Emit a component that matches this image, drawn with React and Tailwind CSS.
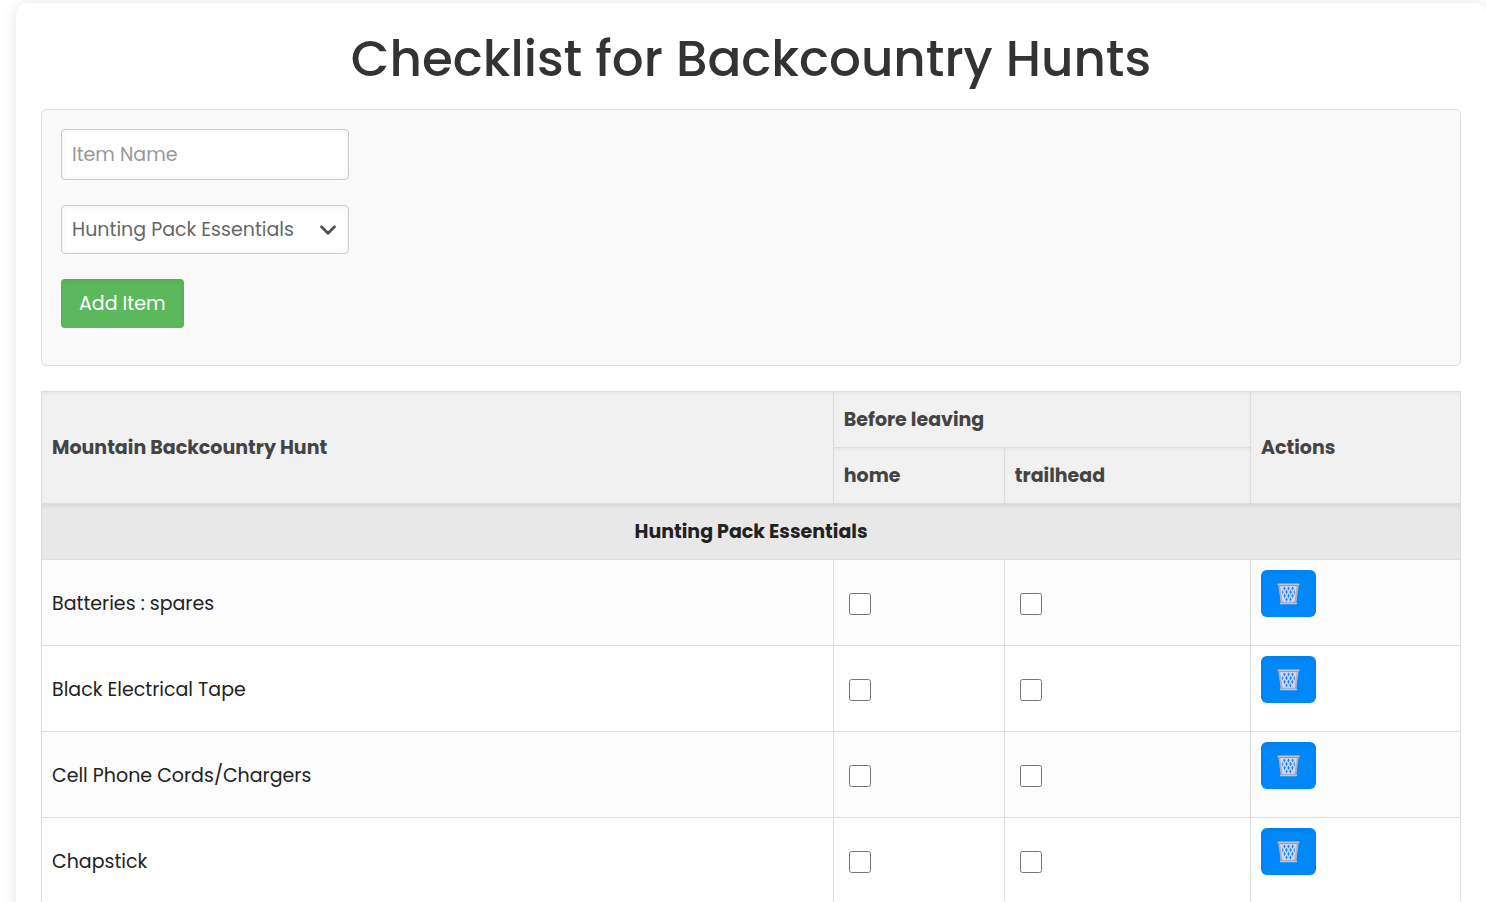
import React, { useState } from "react";
import { ChevronDown } from "lucide-react";

const categories = [
  {
    name: "Hunting Pack Essentials",
    items: ["Batteries : spares", "Black Electrical Tape", "Cell Phone Cords/Chargers", "Chapstick"],
  },
];

const BasketIcon = () => (
  <svg viewBox="0 0 24 24" className="w-6 h-6" aria-hidden="true">
    <path d="M3 3.5h19L20 21.5H5z" fill="#d3d6f0" />
    <g fill="#1a86ea">
      <path d="M8.4 4.4l1.2 1.8-1.2 2.4-1.2-2.4zM12.5 4.4l1.2 1.8-1.2 2.4-1.2-2.4zM16.6 4.4l1.2 1.8-1.2 2.4-1.2-2.4z" />
      <path d="M10.5 7.6l1.2 2.4-1.2 2.4-1.2-2.4zM14.5 7.6l1.2 2.4-1.2 2.4-1.2-2.4zM6.5 7.6l1 2.4-.8 2.4-.6-1.6zM18.5 7.6l-1 2.4.8 2.4.6-1.6z" />
      <path d="M8.6 11.4l1.1 2.4-1.1 2.4-1.1-2.4zM12.5 11.4l1.2 2.4-1.2 2.4-1.2-2.4zM16.4 11.4l1.1 2.4-1.1 2.4-1.1-2.4z" />
      <path d="M10.6 15.2l1.1 2.4-1.1 2-1.1-2zM14.4 15.2l1.1 2.4-1.1 2-1.1-2z" />
    </g>
    <path d="M3.2 3.5L5.8 21M21.8 3.5L19.2 21" stroke="#b5acb8" strokeWidth="1.8" fill="none" />
    <path d="M2.4 2.4h20.2" stroke="#c9c1c9" strokeWidth="2" strokeLinecap="round" />
    <path d="M2.8 3.6h19.4" stroke="#94899a" strokeWidth="0.7" />
    <path d="M4.8 21.4h15.4" stroke="#c9c1c9" strokeWidth="1.8" strokeLinecap="round" />
    <path d="M5.4 20.3h14.2" stroke="#94899a" strokeWidth="0.6" />
  </svg>
);

const App = () => {
  const [itemName, setItemName] = useState("");
  const [category, setCategory] = useState(categories[0].name);
  const [list, setList] = useState(categories);

  const handleSubmit = (e) => {
    e.preventDefault();
    const name = itemName.trim();
    if (!name) return;
    setList(list.map((c) => (c.name === category ? { ...c, items: [...c.items, name] } : c)));
    setItemName("");
  };

  const handleDelete = (categoryName, index) => {
    setList(
      list.map((c) =>
        c.name === categoryName ? { ...c, items: c.items.filter((_, i) => i !== index) } : c
      )
    );
  };

  const th = "border border-[#dddddd] bg-[#f1f1f1] px-[10px] py-[14px] text-left font-bold text-[#444444] shadow-[inset_0_4px_5px_-3px_rgba(0,0,0,0.06)]";
  const td = "border border-[#dddddd] px-[10px]";

  return (
    <div className="h-screen overflow-x-hidden overflow-y-auto bg-white pl-4 pt-[3px] font-['Poppins','Inter',sans-serif] text-[19px] leading-[27px] text-[#222222] [scrollbar-width:none]">
      <main className="rounded-[10px] bg-white px-[25px] pt-[26px] pb-[25px] shadow-[0_0_15px_rgba(0,0,0,0.1)]">
        <h1 className="mb-5 text-center text-[50px] leading-[60px] font-medium text-[#333333]">
          Checklist for Backcountry Hunts
        </h1>

        <form
          onSubmit={handleSubmit}
          className="mb-[25px] flex flex-col items-start gap-[25px] rounded-[5px] border border-[#dddddd] bg-[#f9f9f9] px-[19px] pt-[19px] pb-[37px]"
        >
          <input
            type="text"
            aria-label="Item Name"
            placeholder="Item Name"
            className="h-[51px] w-72 rounded-[4px] border border-[#cccccc] bg-white px-[10px] text-[#666666] shadow-[inset_0_0_6px_rgba(0,0,0,0.06)] placeholder:text-[#999999] focus:outline-none"
            value={itemName}
            onChange={(e) => setItemName(e.target.value)}
          />
          <div className="relative w-72">
            <select
              aria-label="Category"
              className="block h-[49px] w-full appearance-none rounded-[4px] border border-[#cccccc] bg-white pr-10 pl-[10px] text-[#666666] shadow-[inset_0_0_6px_rgba(0,0,0,0.06)] focus:outline-none"
              value={category}
              onChange={(e) => setCategory(e.target.value)}
            >
              {list.map((c) => (
                <option key={c.name}>{c.name}</option>
              ))}
            </select>
            <ChevronDown
              size={26}
              strokeWidth={2.6}
              className="pointer-events-none absolute top-3 right-2 text-[#505050]"
            />
          </div>
          <button
            type="submit"
            className="h-[49px] cursor-pointer rounded-[4px] bg-[#5cb85c] px-[18px] text-white shadow-[inset_0_2px_4px_rgba(0,0,0,0.08)] hover:bg-[#4cae4c]"
          >
            Add Item
          </button>
        </form>

        <table className="w-full table-fixed border-collapse">
          <colgroup>
            <col className="w-[55.8%]" />
            <col className="w-[12.05%]" />
            <col className="w-[17.35%]" />
            <col className="w-[14.8%]" />
          </colgroup>
          <thead>
            <tr>
              <th rowSpan={2} className={th}>Mountain Backcountry Hunt</th>
              <th colSpan={2} className={th}>Before leaving</th>
              <th rowSpan={2} className={th}>Actions</th>
            </tr>
            <tr>
              <th className={th}>home</th>
              <th className={th}>trailhead</th>
            </tr>
          </thead>
          {list.map((c) => (
            <tbody key={c.name}>
              <tr>
                <th
                  colSpan={4}
                  className="border border-[#dddddd] bg-[#e8e8e8] px-[10px] py-[14px] text-center font-bold shadow-[inset_0_5px_5px_-3px_rgba(0,0,0,0.08)]"
                >
                  {c.name}
                </th>
              </tr>
              {c.items.map((item, i) => (
                <tr key={item + i} className="odd:bg-white even:bg-[#fcfcfc]">
                  <td className={`${td} pt-[2px]`}>{item}</td>
                  <td className={`${td} pt-[2px]`}>
                    <input
                      type="checkbox"
                      aria-label={`${item}, before leaving home`}
                      className="mx-[5px] block h-[22px] w-[22px]"
                    />
                  </td>
                  <td className={`${td} pt-[2px]`}>
                    <input
                      type="checkbox"
                      aria-label={`${item}, before leaving trailhead`}
                      className="mx-[5px] block h-[22px] w-[22px]"
                    />
                  </td>
                  <td className={`${td} pt-[10px] pb-[28px]`}>
                    <button
                      type="button"
                      aria-label={`Delete ${item}`}
                      onClick={() => handleDelete(c.name, i)}
                      className="flex h-[47px] w-[55px] cursor-pointer items-center justify-center rounded-[6px] bg-[#0088f8] shadow-[inset_0_2px_4px_rgba(0,0,0,0.08)] hover:bg-[#0077dd]"
                    >
                      <BasketIcon />
                    </button>
                  </td>
                </tr>
              ))}
            </tbody>
          ))}
        </table>
      </main>
    </div>
  );
};

export default App;
